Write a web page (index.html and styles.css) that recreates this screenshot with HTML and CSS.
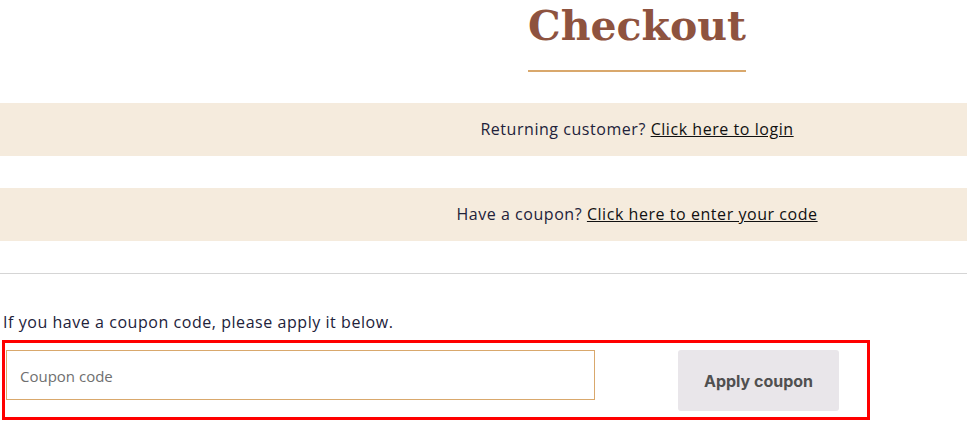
FILE: index.html
```html
<!DOCTYPE html>
<html lang="en">

<head>
    <meta charset="UTF-8">
    <meta name="viewport" content="width=device-width, initial-scale=1.0">
    <title>Checkout</title>
    <link rel="stylesheet" href="styles.css">
</head>

<body>
    <div class="page">
        <div class="title-block">
            <h1 class="title">Checkout</h1>
        </div>

        <div class="notice">
            Returning customer? <a href="#">Click here to login</a>
        </div>
        <div class="notice">
            Have a coupon? <a href="#">Click here to enter your code</a>
        </div>

        <hr class="rule">

        <form class="coupon">
            <p class="coupon-hint">If you have a coupon code, please apply it below.</p>
            <div class="coupon-row">
                <input type="text" class="coupon-input" name="coupon_code" placeholder="Coupon code">
                <button type="button" class="coupon-btn">Apply coupon</button>
            </div>
        </form>
    </div>
</body>

</html>
```

FILE: styles.css
```css
html, body {
    margin: 0;
    overflow: hidden;
}

body {
    font-family: "Open Sans", "Lato", sans-serif;
    font-size: 16px;
    letter-spacing: 0.55px;
    color: #22223a;
    background: #ffffff;
}

/* the shop's content column is centred further right than the window */
.title-block {
    text-align: center;
    height: 103px;
    padding-left: 307px;
}

.title {
    display: inline-block;
    margin: 0;
    padding-bottom: 18px;
    font-family: "DejaVu Serif", serif;
    font-weight: bold;
    font-size: 41px;
    letter-spacing: 0;
    line-height: 52px;
    color: #8e533f;
    border-bottom: 2px solid #d9a86c;
}

.notice {
    background: #f5ebdd;
    height: 53px;
    line-height: 53px;
    text-align: center;
    padding-left: 307px;
    margin-bottom: 32px;
}

.notice a {
    color: #111111;
    text-decoration: underline;
}

.rule {
    margin: 0;
    border: 0;
    border-top: 1px solid #d5d5d5;
}

.coupon {
    margin: 0;
}

.coupon-hint {
    margin: 37px 0 0 3px;
    line-height: 22px;
}

.coupon-row {
    display: flex;
    align-items: flex-start;
    gap: 83px;
    width: 861px;
    margin: 7px 0 0 2px;
    padding: 7px 0 6px 1px;
    border: 3px solid #ff0000;
}

.coupon-input {
    box-sizing: border-box;
    width: 589px;
    height: 50px;
    margin: 0;
    padding: 2px 13px 0;
    border: 1px solid #d9a86c;
    font-family: "Open Sans", sans-serif;
    font-size: 15px;
    letter-spacing: 0;
    color: #333;
}

.coupon-input::placeholder {
    color: #6f6f6f;
}

.coupon-btn {
    width: 161px;
    height: 61px;
    border: 0;
    border-radius: 3px;
    background: #e9e6ea;
    color: #505050;
    font-family: "Inter", sans-serif;
    font-weight: bold;
    font-size: 16px;
    letter-spacing: 0;
}
```
